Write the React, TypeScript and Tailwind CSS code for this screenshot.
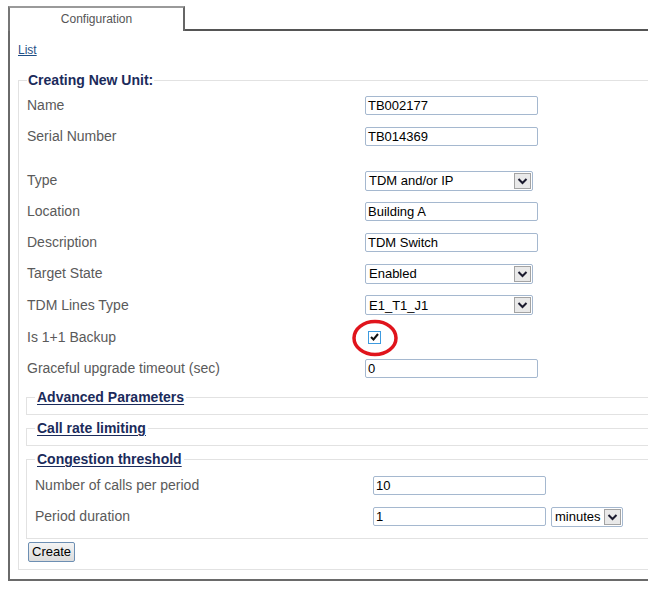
import React from "react";

const font = { fontFamily: '"Liberation Sans", Arial, sans-serif' };

const TextBox = ({ value, width = "w-[173px]" }: { value: string; width?: string }) => (
  <div
    className={`${width} h-[19px] border border-[#a5b8cf] rounded-[2px] bg-white px-[2px] text-[13px] leading-[17px] text-black`}
  >
    {value}
  </div>
);

const Chevron = () => (
  <svg width="11" height="8" viewBox="0 0 11 8">
    <path d="M1.5 2 L5.5 6 L9.5 2" fill="none" stroke="#1a1a2e" strokeWidth="2" />
  </svg>
);

const SelectBox = ({ value, width = "w-[168px]" }: { value: string; width?: string }) => (
  <div
    className={`${width} h-[20px] border border-[#a5b8cf] rounded-[2px] bg-white flex items-center justify-between pl-[3px] pr-[1px]`}
  >
    <span className="text-[13px] leading-[17px] text-black">{value}</span>
    <span className="w-[17px] h-[16px] border border-[#a3a3a3] bg-[#e9e9e9] flex items-center justify-center">
      <Chevron />
    </span>
  </div>
);

const Row = ({ label, h = "h-[31px]", children }: { label: string; h?: string; children: React.ReactNode }) => (
  <div className={`flex items-center ${h}`}>
    <div className="w-[338px] text-[14px] leading-[16px] text-[#5a5a5a] -mt-[1px]">{label}</div>
    <div className="flex items-center gap-[5px]">{children}</div>
  </div>
);

const SubSection = ({ title, children }: { title: string; children?: React.ReactNode }) => (
  <fieldset className="mt-[4px] -ml-[1px] border border-[#e2e2e2] pl-[8px] pb-[8px]">
    <legend className="px-[2px] text-[14px] leading-[18px] font-bold text-[#1b2b5b] underline underline-offset-2">
      {title}
    </legend>
    {children}
  </fieldset>
);

export default function App() {
  return (
    <div className="w-[648px] h-[599px] overflow-hidden bg-white" style={font}>
      <div className="w-[720px] pt-[6px] pl-[8px]">
        <div className="flex h-[25px]">
          <div className="w-[177px] border-t-2 border-l-2 border-r-2 border-t-[#9a9a9a] border-l-[#777] border-r-[#666] text-center text-[12px] leading-[22px] text-[#555]">
            Configuration
          </div>
          <div className="flex-1 border-b-2 border-[#555]" />
        </div>
        <div className="border-l-2 border-b-2 border-[#6a6a6a] pl-[8px] pb-[9px]">
          <div className="pt-[12px] text-[12px] leading-[14px]">
            <a href="#" className="text-[#1f4f86] underline">List</a>
          </div>
          <fieldset className="mt-[14px] border border-[#e2e2e2] pl-[8px] pb-[6px]">
            <legend className="px-[1px] text-[14px] leading-[18px] font-bold text-[#1b2b5b]">
              Creating New Unit:
            </legend>
            <div className="pt-[1px]">
              <Row label="Name"><TextBox value="TB002177" /></Row>
              <Row label="Serial Number"><TextBox value="TB014369" /></Row>
              <div className="h-[13px]" />
              <Row label="Type"><SelectBox value="TDM and/or IP" /></Row>
              <Row label="Location"><TextBox value="Building A" /></Row>
              <Row label="Description"><TextBox value="TDM Switch" /></Row>
              <Row label="Target State"><SelectBox value="Enabled" /></Row>
              <Row label="TDM Lines Type" h="h-[32px]"><SelectBox value="E1_T1_J1" /></Row>
              <Row label="Is 1+1 Backup" h="h-[32px]">
                <div className="relative pl-[3px]">
                  <div className="w-[13px] h-[13px] border border-[#3d9be0] bg-white flex items-center justify-center">
                    <svg width="9" height="8" viewBox="0 0 9 8">
                      <path d="M1 4 L3.5 6.5 L8 1" fill="none" stroke="#111" strokeWidth="2" />
                    </svg>
                  </div>
                  <svg
                    className="absolute left-[-13px] top-[-12px]"
                    width="46"
                    height="38"
                    viewBox="0 0 46 38"
                  >
                    <ellipse cx="23" cy="19" rx="21" ry="16.5" fill="none" stroke="#e0141c" strokeWidth="3.5" />
                  </svg>
                </div>
              </Row>
              <Row label="Graceful upgrade timeout (sec)"><TextBox value="0" /></Row>
            </div>
            <SubSection title="Advanced Parameters" />
            <SubSection title="Call rate limiting" />
            <fieldset className="mt-[4px] -ml-[1px] border border-[#e2e2e2] pl-[8px] pb-[6px]">
              <legend className="px-[2px] text-[14px] leading-[18px] font-bold text-[#1b2b5b] underline underline-offset-2">
                Congestion threshold
              </legend>
              <div className="pt-[2px]">
                <Row label="Number of calls per period"><TextBox value="10" /></Row>
                <Row label="Period duration">
                  <TextBox value="1" />
                  <SelectBox value="minutes" width="w-[72px]" />
                </Row>
              </div>
            </fieldset>
            <button className="mt-[2px] ml-[1px] h-[20px] px-[3px] border border-[#6d8fb3] rounded-[2px] bg-gradient-to-b from-[#f4f4f4] to-[#dcdcdc] text-[13px] leading-[16px] text-black">
              Create
            </button>
          </fieldset>
        </div>
      </div>
    </div>
  );
}
